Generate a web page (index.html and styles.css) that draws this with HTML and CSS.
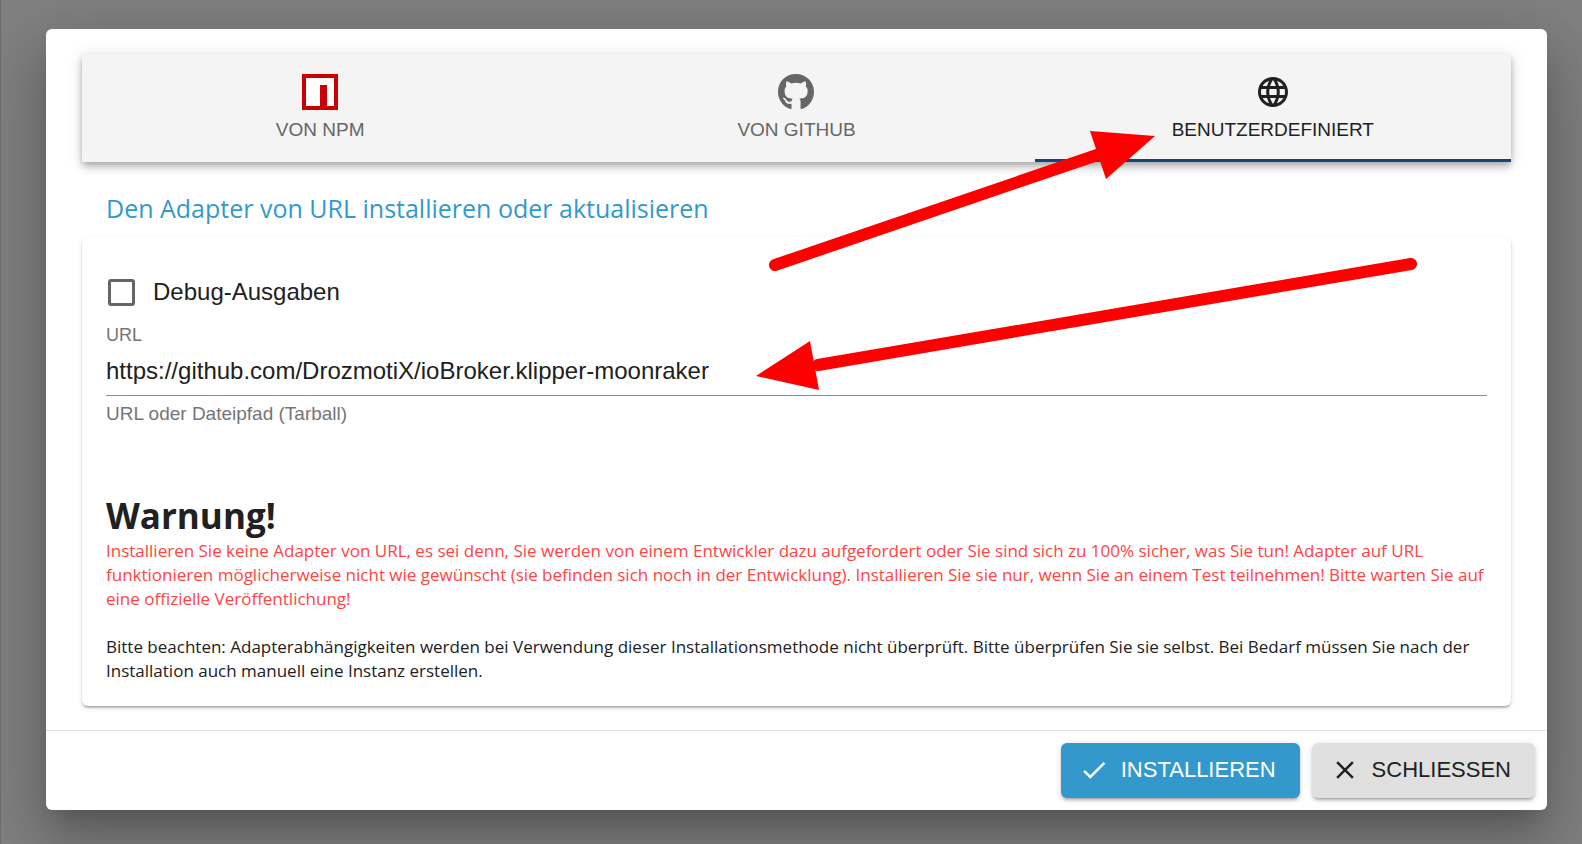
FILE: index.html
```
<!DOCTYPE html>
<html lang="de">
<head>
  <meta charset="UTF-8" />
  <meta name="viewport" content="width=device-width, initial-scale=1.0"/>
  <title>Adapter installieren</title>
  <link rel="stylesheet" href="styles.css">
</head>
<body>
  <div class="dialog" role="dialog" aria-labelledby="title">
    <div class="content">
      <div class="tabs" role="tablist">
        <button type="button" class="tab" role="tab">
          <svg class="tab-icon" viewBox="0 0 36 36">
            <rect width="36" height="36" fill="#cb0000"/>
            <path fill="#fff" d="M4 4h28v28h-7V11h-7v21H4z"/>
          </svg>
          Von npm
        </button>
        <button type="button" class="tab" role="tab">
          <svg class="tab-icon" viewBox="0 0 496 496" fill="currentColor">
            <path d="M165.900 389.400c0 2-2.300 3.600-5.200 3.600-3.300.3-5.600-1.300-5.600-3.600 0-2 2.300-3.600 5.200-3.600 3-.3 5.600 1.300 5.600 3.600zM244.800 0C106.100 0 0 105.300 0 244c0 110.900 69.800 205.800 169.500 239.200 12.800 2.300 17.300-5.600 17.300-12.100 0-6.200-.3-40.400-.3-61.400 0 0-70 15-84.700-29.800 0 0-11.400-29.100-27.800-36.600 0 0-22.900-15.700 1.600-15.400 0 0 24.900 2 38.600 25.800 21.900 38.600 58.600 27.500 72.900 20.900 2.300-16 8.800-27.100 16-33.700-55.900-6.200-112.300-14.300-112.300-110.500 0-27.500 7.600-41.300 23.600-58.900-2.600-6.500-11.100-33.300 2.600-67.900 20.900-6.500 69 27 69 27 20-5.600 41.500-8.500 62.800-8.500s42.800 2.900 62.800 8.500c0 0 48.100-33.600 69-27 13.700 34.700 5.200 61.400 2.600 67.900 16 17.700 25.800 31.500 25.800 58.900 0 96.500-58.900 104.200-114.800 110.500 9.200 7.900 17 22.900 17 46.400 0 33.700-.3 75.400-.3 83.600 0 6.500 4.600 14.400 17.300 12.100C428.200 449.800 496 354.900 496 244 496 105.300 383.500 0 244.800 0z"/>
          </svg>
          Von GitHub
        </button>
        <button type="button" class="tab active" role="tab" aria-selected="true">
          <svg class="tab-icon" viewBox="0 0 24 24" fill="currentColor">
            <path d="M11.990 2C6.470 2 2 6.480 2 12s4.470 10 9.990 10C17.520 22 22 17.520 22 12S17.520 2 11.990 2zm6.930 6h-2.950c-.32-1.250-.78-2.450-1.380-3.560 1.840.63 3.370 1.910 4.330 3.560zM12 4.040c.83 1.200 1.480 2.530 1.910 3.960h-3.820c.43-1.430 1.080-2.760 1.910-3.960zM4.260 14C4.100 13.360 4 12.690 4 12s.1-1.360.26-2h3.380c-.08.66-.14 1.320-.14 2s.06 1.340.14 2H4.260zm.82 2h2.950c.32 1.250.78 2.450 1.380 3.560-1.840-.63-3.370-1.900-4.330-3.560zm2.950-8H5.080c.96-1.660 2.490-2.930 4.330-3.560C8.810 5.550 8.350 6.750 8.030 8zM12 19.960c-.83-1.200-1.480-2.530-1.910-3.960h3.820c-.43 1.430-1.080 2.760-1.910 3.960zM14.340 14H9.660c-.09-.66-.16-1.320-.16-2s.07-1.350.16-2h4.680c.09.65.16 1.320.16 2s-.07 1.340-.16 2zm.25 5.560c.6-1.110 1.060-2.310 1.380-3.560h2.950c-.96 1.650-2.490 2.930-4.330 3.560zM16.360 14c.08-.66.14-1.320.14-2s-.06-1.340-.14-2h3.380c.16.64.26 1.310.26 2s-.1 1.360-.26 2h-3.380z"/>
          </svg>
          Benutzerdefiniert
        </button>
      </div>

      <h2 id="title">Den Adapter von URL installieren oder aktualisieren</h2>

      <div class="card">
        <div class="check-row">
          <input type="checkbox" id="debug" />
          <label for="debug">Debug-Ausgaben</label>
        </div>

        <label class="url-label" for="url">URL</label>
        <input type="text" class="url-input" id="url" value="https://github.com/DrozmotiX/ioBroker.klipper-moonraker" spellcheck="false" aria-describedby="url-help" />
        <p class="help" id="url-help">URL oder Dateipfad (Tarball)</p>

        <h1>Warnung!</h1>
        <p class="text error">Installieren Sie keine Adapter von URL, es sei denn, Sie werden von einem Entwickler dazu aufgefordert oder Sie sind sich zu 100% sicher, was Sie tun! Adapter auf URL funktionieren möglicherweise nicht wie gewünscht (sie befinden sich noch in der Entwicklung). Installieren Sie sie nur, wenn Sie an einem Test teilnehmen! Bitte warten Sie auf eine offizielle Veröffentlichung!</p>
        <p class="text note">Bitte beachten: Adapterabhängigkeiten werden bei Verwendung dieser Installationsmethode nicht überprüft. Bitte überprüfen Sie sie selbst. Bei Bedarf müssen Sie nach der Installation auch manuell eine Instanz erstellen.</p>
      </div>
    </div>

    <div class="actions">
      <button type="button" class="btn primary">
        <svg class="btn-icon" viewBox="0 0 24 24" fill="currentColor"><path d="M9 16.200L4.800 12l-1.400 1.400L9 19 21 7l-1.400-1.400L9 16.200z"/></svg>
        Installieren
      </button>
      <button type="button" class="btn">
        <svg class="btn-icon" viewBox="0 0 24 24" fill="currentColor"><path d="M19 6.410L17.590 5 12 10.590 6.410 5 5 6.410 10.590 12 5 17.590 6.410 19 12 13.410 17.590 19 19 17.590 13.410 12z"/></svg>
        Schliessen
      </button>
    </div>
  </div>

  <svg class="arrows" viewBox="0 0 1582 844" aria-hidden="true">
    <g stroke="#f00" stroke-width="12" stroke-linecap="round">
      <path d="M775 265L1100 154"/>
      <path d="M1411 264L818 365"/>
    </g>
    <g fill="#f00">
      <path d="M1155 136L1090 131L1106 179z"/>
      <path d="M756 376L810 341L819 390z"/>
    </g>
  </svg>
</body>
</html>
```

FILE: styles.css
```
* {
  box-sizing: border-box;
}

body {
  font-family: 'Segoe UI', 'Open Sans', sans-serif;
  background: #808080;
  color: #212121;
  margin: 0;
  padding: 29px 35px 34px 45px;
  min-height: 100vh;
  border-left: 1px solid #6c6c6c;
  position: relative;
  overflow: hidden;
}

h1, h2, p {
  margin: 0;
}

button, input, label, .help {
  font-family: Arial, 'Liberation Sans', sans-serif;
}

.dialog {
  background: #fff;
  border-radius: 6px;
  box-shadow: 0 16px 22px -10px rgba(0,0,0,0.2), 0 36px 57px 4px rgba(0,0,0,0.14), 0 14px 69px 12px rgba(0,0,0,0.12);
}

.content {
  padding: 25px 36px 24px;
}

.tabs {
  display: flex;
  background: #f4f4f4;
  box-shadow: 0 3px 6px -1px rgba(0,0,0,0.2), 0 6px 8px 0 rgba(0,0,0,0.14), 0 1px 15px 0 rgba(0,0,0,0.12);
}

.tab {
  flex: 1;
  display: flex;
  flex-direction: column;
  align-items: center;
  gap: 8px;
  padding: 20px 18px;
  border: none;
  background: none;
  color: #666;
  font-size: 19px;
  line-height: 24px;
  text-transform: uppercase;
  cursor: pointer;
}

.tab.active {
  color: #212121;
  box-shadow: inset 0 -3px #164477;
}

.tab-icon {
  width: 36px;
  height: 36px;
}

h2 {
  margin: 26px 24px 9px;
  color: #3399cc;
  font-size: 25px;
  font-weight: 400;
  line-height: 40px;
}

.card {
  padding: 37px 24px 23px;
  border-radius: 6px;
  box-shadow: 0 3px 2px -2px rgba(0,0,0,0.2), 0 2px 2px 0 rgba(0,0,0,0.14), 0 2px 5px 0 rgba(0,0,0,0.12);
}

.check-row {
  display: flex;
  align-items: center;
  gap: 18px;
  height: 36px;
  margin-bottom: 13px;
  font-size: 24px;
}

.check-row input {
  appearance: none;
  width: 27px;
  height: 27px;
  margin: 0 0 0 2px;
  border: 3px solid #666;
  border-radius: 3px;
}

.url-label {
  display: block;
  color: #757575;
  font-size: 18px;
  line-height: 24px;
}

.url-input {
  display: block;
  width: 100%;
  height: 49px;
  padding: 0;
  border: none;
  border-bottom: 1px solid #8c8c8c;
  background: none;
  color: #212121;
  font-size: 24px;
}

.help {
  margin-top: 6px;
  color: #757575;
  font-size: 19px;
  line-height: 24px;
}

h1 {
  margin-top: 67px;
  font-size: 35px;
  line-height: 46px;
}

.text {
  font-size: 17px;
  line-height: 24px;
}

.error {
  color: #ff4444;
}

.note {
  margin-top: 24px;
}

.actions {
  display: flex;
  justify-content: flex-end;
  gap: 12px;
  padding: 12px;
  border-top: 1px solid #e0e0e0;
}

.btn {
  display: flex;
  align-items: center;
  gap: 12px;
  padding: 12px 24px 13px 18px;
  border: none;
  border-radius: 6px;
  background: #e0e0e0;
  color: #212121;
  font-size: 22px;
  line-height: 30px;
  text-transform: uppercase;
  box-shadow: 0 4px 2px -3px rgba(0,0,0,0.2), 0 3px 3px 0 rgba(0,0,0,0.14), 0 1px 7px 0 rgba(0,0,0,0.12);
  cursor: pointer;
}

.btn.primary {
  background: #3399cc;
  color: #fff;
}

.btn-icon {
  width: 30px;
  height: 30px;
}

.arrows {
  position: absolute;
  top: 0;
  left: -1px;
  width: 1582px;
  height: 844px;
  fill: none;
  pointer-events: none;
}
```
